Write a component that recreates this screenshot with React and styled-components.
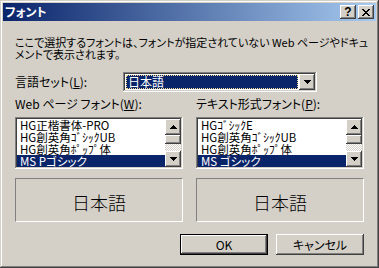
import React from "react";
import styled, { createGlobalStyle } from "styled-components";

const FACE = "#D4D0C8";
const NAVY = "#0A246A";

const raised = `
  box-shadow: inset -1px -1px #404040, inset 1px 1px #fff,
    inset -2px -2px #808080, inset 2px 2px ${FACE};
`;

const sunken = `
  box-shadow: inset -1px -1px #fff, inset 1px 1px #808080,
    inset -2px -2px ${FACE}, inset 2px 2px #404040;
`;

const GlobalStyle = createGlobalStyle`
  html, body {
    margin: 0;
    padding: 0;
    background: ${FACE};
  }
  body {
    font-family: "Noto Sans CJK JP", "Noto Sans", sans-serif;
    font-size: 12px;
    color: #000;
  }
`;

const Window = styled.div`
  width: 379px;
  height: 268px;
  box-sizing: border-box;
  padding: 3px;
  background: ${FACE};
  box-shadow: inset -1px -1px #404040, inset 1px 1px ${FACE},
    inset -2px -2px #808080, inset 2px 2px #fff;
  display: flex;
  flex-direction: column;
  font-feature-settings: "palt";
`;

const TitleBar = styled.div`
  height: 18px;
  display: flex;
  align-items: center;
  padding: 0 2px 0 2px;
  background: linear-gradient(to right, ${NAVY}, #a6caf0);
`;

const Title = styled.div`
  flex: 1;
  color: #fff;
  font-weight: bold;
  font-size: 12px;
  line-height: 18px;
`;

const TitleButton = styled.div`
  width: 16px;
  height: 14px;
  box-sizing: border-box;
  margin-left: ${(p) => (p.$gap ? "2px" : "0")};
  background: ${FACE};
  ${raised}
  display: flex;
  align-items: center;
  justify-content: center;
  font-family: "Liberation Sans", sans-serif;
  font-weight: bold;
  font-size: 12px;
  line-height: 14px;
`;

const Content = styled.div`
  padding: 15px 12px 0 12px;
  display: flex;
  flex-direction: column;
`;

const Intro = styled.p`
  margin: 0;
  font-size: 11px;
  line-height: 12px;
  white-space: nowrap;
`;

const ComboRow = styled.div`
  margin-top: 12px;
  display: flex;
  align-items: center;
`;

const Label = styled.div`
  width: ${(p) => p.$width || "auto"};
  line-height: 12px;
  white-space: nowrap;
`;

const Combo = styled.div`
  width: 194px;
  height: 20px;
  box-sizing: border-box;
  padding: 2px;
  background: #fff;
  ${sunken}
  display: flex;
`;

const ComboValue = styled.div`
  flex: 1;
  margin: 1px;
  padding-left: 2px;
  background: ${NAVY};
  color: #fff;
  outline: 1px dotted #f0d890;
  outline-offset: -1px;
  line-height: 14px;
`;

const DropButton = styled.div`
  width: 16px;
  background: ${FACE};
  ${raised}
  display: flex;
  align-items: center;
  justify-content: center;
`;

const Columns = styled.div`
  margin-top: 6px;
  display: grid;
  grid-template-columns: 168px 168px;
  column-gap: 13px;
`;

const Column = styled.div`
  display: flex;
  flex-direction: column;
`;

const ListBox = styled.div`
  margin-top: 7px;
  height: 52px;
  box-sizing: border-box;
  padding: 2px;
  background: #fff;
  ${sunken}
  display: flex;
`;

const Items = styled.div`
  flex: 1;
  overflow: hidden;
`;

const Item = styled.div`
  height: 12px;
  line-height: 12px;
  font-size: 11.5px;
  padding-left: 3px;
  white-space: nowrap;
  background: ${(p) => (p.$selected ? NAVY : "transparent")};
  color: ${(p) => (p.$selected ? "#fff" : "#000")};
`;

const ScrollBar = styled.div`
  width: 16px;
  display: flex;
  flex-direction: column;
`;

const ScrollButton = styled.div`
  height: 16px;
  background: ${FACE};
  ${raised}
  display: flex;
  align-items: center;
  justify-content: center;
`;

const Track = styled.div`
  flex: 1;
  display: flex;
  flex-direction: column;
  background-image: repeating-conic-gradient(#fff 0 25%, ${FACE} 0 50%);
  background-size: 2px 2px;
`;

const Thumb = styled.div`
  height: 9px;
  background: ${FACE};
  ${raised}
`;

const Preview = styled.div`
  margin-top: 9px;
  height: 44px;
  box-sizing: border-box;
  border: 1px solid;
  border-color: #808080 #fff #fff #808080;
  display: flex;
  align-items: center;
  justify-content: center;
  padding-top: 4px;
  font-size: 18px;
  font-weight: 300;
`;

const ButtonRow = styled.div`
  margin-top: 12px;
  display: flex;
  justify-content: flex-end;
  gap: 8px;
`;

const PushButton = styled.div`
  width: 88px;
  height: 21px;
  box-sizing: border-box;
  background: ${FACE};
  border: ${(p) => (p.$default ? "1px solid #000" : "0")};
  ${raised}
  display: flex;
  align-items: center;
  justify-content: center;
  line-height: 12px;
`;

const Arrow = ({ up }) => (
  <svg width="7" height="4" viewBox="0 0 7 4" shapeRendering="crispEdges">
    <path
      d="M0 0h7v1h-1v1h-1v1h-1v1h-1v-1h-1v-1h-1v-1h-1z"
      fill="#000"
      transform={up ? "rotate(180 3.5 2)" : undefined}
    />
  </svg>
);

const closeRows = ["11000011", "01100110", "00111100", "00011000", "00111100", "01100110", "11000011"];

const CloseGlyph = () => (
  <svg width="8" height="7" viewBox="0 0 8 7" shapeRendering="crispEdges">
    {closeRows.map((row, y) =>
      row.split("").map((c, x) =>
        c === "1" ? <rect key={`${x}-${y}`} x={x} y={y} width="1" height="1" fill="#000" /> : null,
      ),
    )}
  </svg>
);

const FontList = ({ items, selected }) => (
  <ListBox>
    <Items>
      {items.map((name) => (
        <Item key={name} $selected={name === selected}>
          {name}
        </Item>
      ))}
    </Items>
    <ScrollBar>
      <ScrollButton>
        <Arrow up />
      </ScrollButton>
      <Track>
        <Thumb />
      </Track>
      <ScrollButton>
        <Arrow />
      </ScrollButton>
    </ScrollBar>
  </ListBox>
);

const webFonts = ["HG正楷書体-PRO", "HG創英角ｺﾞｼｯｸUB", "HG創英角ﾎﾟｯﾌﾟ体", "MS Pゴシック"];
const textFonts = ["HGｺﾞｼｯｸE", "HG創英角ｺﾞｼｯｸUB", "HG創英角ﾎﾟｯﾌﾟ体", "MS ゴシック"];

const App = () => {
  return (
    <>
      <GlobalStyle />
      <Window>
        <TitleBar>
          <Title>フォント</Title>
          <TitleButton>?</TitleButton>
          <TitleButton $gap>
            <CloseGlyph />
          </TitleButton>
        </TitleBar>
        <Content>
          <Intro>
            ここで選択するフォントは、フォントが指定されていない Web ページやドキュ
            <br />
            メントで表示されます。
          </Intro>
          <ComboRow>
            <Label $width="108px">
              言語セット(<u>L</u>):
            </Label>
            <Combo>
              <ComboValue>日本語</ComboValue>
              <DropButton>
                <Arrow />
              </DropButton>
            </Combo>
          </ComboRow>
          <Columns>
            <Column>
              <Label>
                Web ページ フォント(<u>W</u>):
              </Label>
              <FontList items={webFonts} selected="MS Pゴシック" />
              <Preview>日本語</Preview>
            </Column>
            <Column>
              <Label>
                テキスト形式フォント(<u>P</u>):
              </Label>
              <FontList items={textFonts} selected="MS ゴシック" />
              <Preview>日本語</Preview>
            </Column>
          </Columns>
          <ButtonRow>
            <PushButton $default>OK</PushButton>
            <PushButton>キャンセル</PushButton>
          </ButtonRow>
        </Content>
      </Window>
    </>
  );
};

export default App;
